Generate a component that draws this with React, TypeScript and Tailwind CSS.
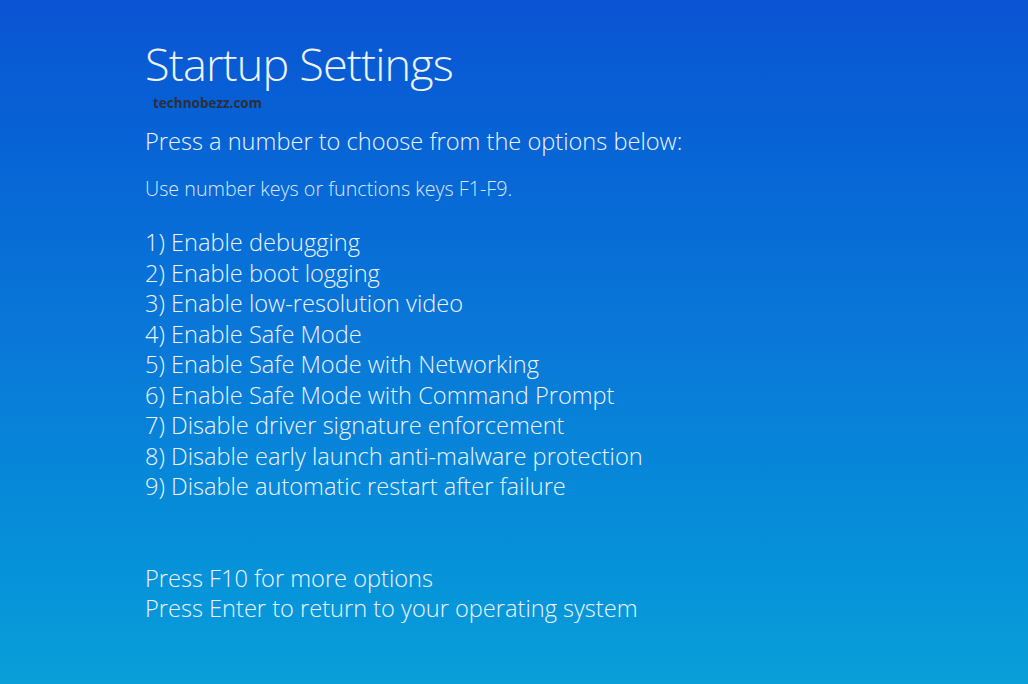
const options = [
  '1) Enable debugging',
  '2) Enable boot logging',
  '3) Enable low-resolution video',
  '4) Enable Safe Mode',
  '5) Enable Safe Mode with Networking',
  '6) Enable Safe Mode with Command Prompt',
  '7) Disable driver signature enforcement',
  '8) Disable early launch anti-malware protection',
  '9) Disable automatic restart after failure',
]

export default function App() {
  return (
    <div
      className="w-[1028px] h-[684px] overflow-hidden bg-gradient-to-b from-[#0b54d3] via-[#0a78d8] to-[#0a9fd9] text-[#eef4ff] font-light pl-[145px] pt-[34px]"
      style={{ fontFamily: '"Open Sans", "Noto Sans", sans-serif' }}
    >
      <h1 className="text-[45px] leading-[60px] tracking-[-0.85px]">Startup Settings</h1>
      <div className="pl-[8px] h-[22px] text-[13.5px] font-bold text-[#2b2f3a] leading-[18px]">technobezz.com</div>
      <p className="mt-[10px] text-[23.6px] leading-[30px]">Press a number to choose from the options below:</p>
      <p className="mt-[19px] text-[19.7px] leading-[28px] text-[#dbe8fb]">Use number keys or functions keys F1-F9.</p>
      <ul className="mt-[24px]">
        {options.map((o) => (
          <li key={o} className="text-[23.6px] leading-[30.5px]">{o}</li>
        ))}
      </ul>
      <div className="mt-[61px]">
        <p className="text-[23.6px] leading-[30.5px]">Press F10 for more options</p>
        <p className="text-[23.6px] leading-[30.5px]">Press Enter to return to your operating system</p>
      </div>
    </div>
  )
}
